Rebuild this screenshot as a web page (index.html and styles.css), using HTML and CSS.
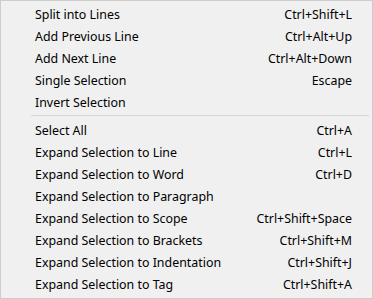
FILE: index.html
```html
<!DOCTYPE html>
<html lang="en">
<head>
  <meta charset="UTF-8">
  <title>Selection Menu</title>
  <link rel="stylesheet" href="styles.css">
</head>
<body>
  <div class="menu">
    <div class="item"><span class="label">Split into Lines</span><span class="key">Ctrl+Shift+L</span></div>
    <div class="item"><span class="label">Add Previous Line</span><span class="key">Ctrl+Alt+Up</span></div>
    <div class="item"><span class="label">Add Next Line</span><span class="key">Ctrl+Alt+Down</span></div>
    <div class="item"><span class="label">Single Selection</span><span class="key">Escape</span></div>
    <div class="item"><span class="label">Invert Selection</span><span class="key"></span></div>
    <div class="sep"></div>
    <div class="item"><span class="label">Select All</span><span class="key">Ctrl+A</span></div>
    <div class="item"><span class="label">Expand Selection to Line</span><span class="key">Ctrl+L</span></div>
    <div class="item"><span class="label">Expand Selection to Word</span><span class="key">Ctrl+D</span></div>
    <div class="item"><span class="label">Expand Selection to Paragraph</span><span class="key"></span></div>
    <div class="item"><span class="label">Expand Selection to Scope</span><span class="key">Ctrl+Shift+Space</span></div>
    <div class="item"><span class="label">Expand Selection to Brackets</span><span class="key">Ctrl+Shift+M</span></div>
    <div class="item"><span class="label">Expand Selection to Indentation</span><span class="key">Ctrl+Shift+J</span></div>
    <div class="item"><span class="label">Expand Selection to Tag</span><span class="key">Ctrl+Shift+A</span></div>
  </div>
</body>
</html>
```

FILE: styles.css
```css
html, body { margin: 0; padding: 0; background: #fff; }
.menu { width: 373px; height: 299px; box-sizing: border-box; border: 1px solid #cccccc; background: #f0f0f0; padding: 2px 0 3px 0; font-family: "Noto Sans", sans-serif; font-size: 12.4px; color: #000; }
.item { display: flex; justify-content: space-between; align-items: center; height: 22px; padding: 0 20px 0 34px; }
.sep { height: 1px; background: #d7d7d7; margin: 2px 3px 3px 30px; }
```
